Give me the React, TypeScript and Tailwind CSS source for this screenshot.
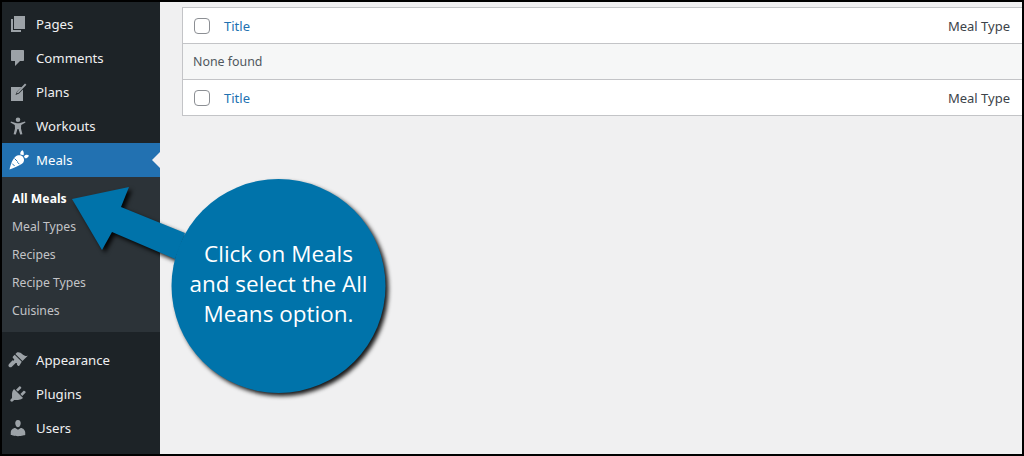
const gray = "#9ca2a7";

const Dash = ({ d, className = "" }: { d: string; className?: string }) => (
  <svg viewBox="0 0 20 20" className={`w-5 h-5 ${className}`} fill={gray}>
    <path d={d} />
  </svg>
);

const icons = {
  pages: "M6 15V2h11v13H6zm-1 1h8v2H3V5h2v11z",
  comments: "M4 2h11c.6 0 1 .4 1 1v9c0 .6-.4 1-1 1h-3l-5 5v-5H4c-.6 0-1-.4-1-1V3c0-.6.4-1 1-1z",
  plans: "M3 5h10.5L9 9.5 7.5 13l3.5-1.5L15 7.5V19H3V5zM17 1.6l1.4 1.2-7.6 7.9-2.2.9.8-2.2 7.6-7.8z",
  workouts: "M10 1.5a2.3 2.3 0 1 1 0 4.6 2.3 2.3 0 0 1 0-4.6zM2.5 6.6l.5-1.1 4.8 1.4c1.5.4 2.9.4 4.4 0L17 5.5l.5 1.1-4.3 2.3-.2 3.6 1.4 5.7-2.2.4L10.5 13h-1l-1.7 5.6-2.2-.4L7 12.5l-.2-3.6-4.3-2.3z",
  appearance: "M14.48 11.06L7.41 3.99l1.5-1.5c.5-.56 2.3-.47 3.51.32 1.21.8 1.43 1.28 2.91 2.1 1.18.64 2.45 1.26 4.45.85zm-.71.71L6.7 4.7 4.93 6.47c-.39.39-.39 1.02 0 1.41l1.06 1.06c.39.39.39 1.02 0 1.41-.39.39-1.02.39-1.41 0l-3.54 3.54c-.78.78-.78 2.05 0 2.83.78.78 2.05.78 2.83 0l3.54-3.54c.39-.39 1.02-.39 1.41 0 .39.39.39 1.02 0 1.41l1.06 1.06c.39.39 1.02.39 1.41 0z",
  plugins: "M13.11 4.36L9.87 7.6 8 5.73l3.24-3.24c.35-.34 1.05-.2 1.56.32.52.51.66 1.21.31 1.55zm-8 1.77l.91-1.12 9.01 9.01-1.19.84c-.71.71-2.63 1.16-3.82 1.16H6.14L4.9 17.26c-.59.59-1.54.59-2.12 0-.59-.58-.59-1.53 0-2.12l1.24-1.24v-3.88c0-1.13.4-3.19 1.09-3.89zm7.26 3.97l3.24-3.24c.34-.35 1.04-.21 1.55.31.52.51.66 1.21.31 1.55l-3.24 3.25z",
  users: "M10 9.25c-2.27 0-2.73-3.44-2.73-3.44C7 4.02 7.82 2 9.97 2c2.16 0 2.98 2.02 2.71 3.81 0 0-.41 3.44-2.68 3.44zm0 2.57L12.72 10c2.39 0 4.52 2.33 4.52 4.53v2.49s-3.65 1.13-7.24 1.13c-3.65 0-7.24-1.13-7.24-1.13v-2.49c0-2.25 1.94-4.48 4.47-4.48z",
};

const Carrot = () => (
  <svg viewBox="0 0 20 20" className="w-5 h-5">
    <path
      fill="#ffffff"
      d="M.5 19.5C1.8 14 3.8 9 6.3 6.8 9 4.6 12.6 5 14.2 7.2c1.5 2.3 1 5-1.2 6.6C10 16 5 18 .5 19.5z"
    />
    <path
      fill="#ffffff"
      d="M11.3 4.6C10.9 2.4 12.2.9 13.6.3c1.1 1.3 1.5 3 1 5zM15 6.2c1.7-1.8 3.6-1.8 4.9-.8-.6 2-2.4 3.2-4 2.8z"
    />
    <path
      fill="none"
      stroke="#2271b1"
      strokeWidth="1"
      d="M5.6 8.6l3 3M3.2 13.6l2.4 2.4M10.4 14.2l-2-2"
    />
  </svg>
);

const MenuItem = ({ icon, label }: { icon: string; label: string }) => (
  <div className="h-[34px] flex items-center text-[#f0f0f1] text-[13.2px]">
    <div className="w-[34px] pl-[6px] shrink-0">
      <Dash d={icon} />
    </div>
    <span className="pt-[1px]">{label}</span>
  </div>
);

const Row = () => (
  <div className="h-[35px] bg-white flex items-center justify-between pl-[11px] pr-[12px] pt-[1px] text-[13px]">
    <div className="flex items-center">
      <div className="w-4 h-4 rounded-[4px] border border-[#8c8f94] bg-white" />
      <span className="ml-[14px] pt-[1px] text-[#2271b1]">Title</span>
    </div>
    <span className="pt-[1px] text-[#3c434a]">Meal Type</span>
  </div>
);

export default function App() {
  return (
    <div
      className="relative w-[1024px] h-[456px] overflow-hidden border-2 border-black bg-[#f0f0f1] flex"
      style={{ fontFamily: '"Noto Sans", sans-serif' }}
    >
      <aside className="w-[158px] shrink-0 bg-[#1d2327] pt-[5px]">
        <MenuItem icon={icons.pages} label="Pages" />
        <MenuItem icon={icons.comments} label="Comments" />
        <MenuItem icon={icons.plans} label="Plans" />
        <MenuItem icon={icons.workouts} label="Workouts" />
        <div className="relative h-[34px] flex items-center bg-[#2271b1] text-white text-[13.2px]">
          <div className="w-[34px] pl-[7px] shrink-0">
            <Carrot />
          </div>
          <span className="pt-[1px]">Meals</span>
          <div className="absolute right-0 top-[9px] w-0 h-0 border-y-[8px] border-y-transparent border-r-[8px] border-r-[#f0f0f1]" />
        </div>
        <div className="h-[155px] bg-[#2c3338] pt-[8px] pl-[10px] text-[12.2px] text-[#c3c4c7]">
          <div className="h-[28px] flex items-center font-bold text-white">All Meals</div>
          <div className="h-[28px] flex items-center">Meal Types</div>
          <div className="h-[28px] flex items-center">Recipes</div>
          <div className="h-[28px] flex items-center">Recipe Types</div>
          <div className="h-[28px] flex items-center">Cuisines</div>
        </div>
        <div className="pt-[11px]">
          <MenuItem icon={icons.appearance} label="Appearance" />
          <MenuItem icon={icons.plugins} label="Plugins" />
          <MenuItem icon={icons.users} label="Users" />
        </div>
      </aside>

      <main className="flex-1 min-w-0 pl-[22px] pt-[5px]">
        <div className="border border-r-0 border-[#c3c4c7]">
          <Row />
          <div className="h-[37px] bg-[#f6f7f7] border-y border-[#c3c4c7] flex items-center pl-[10px] pt-[2px] text-[12.4px] text-[#50575e]">
            None found
          </div>
          <Row />
        </div>
      </main>

      <svg
        className="absolute left-[-2px] top-[-2px] w-[1024px] h-[456px] pointer-events-none drop-shadow-[3px_3px_2px_rgba(0,0,0,0.9)]"
        viewBox="0 0 1024 456"
      >
        <path
          d="M72 199L129 187L121 207L185 233L175 259L112 232L102 250Z"
          fill="#0073aa"
        />
        <circle cx="278.5" cy="286" r="107" fill="#0073aa" />
      </svg>
      <div
        className="absolute left-[169px] top-[237px] w-[215px] text-center text-white text-[22.5px] leading-[30px]"
        style={{ fontFamily: '"Open Sans", sans-serif' }}
      >
        Click on Meals
        <br />
        and select the All
        <br />
        Means option.
      </div>
    </div>
  );
}
